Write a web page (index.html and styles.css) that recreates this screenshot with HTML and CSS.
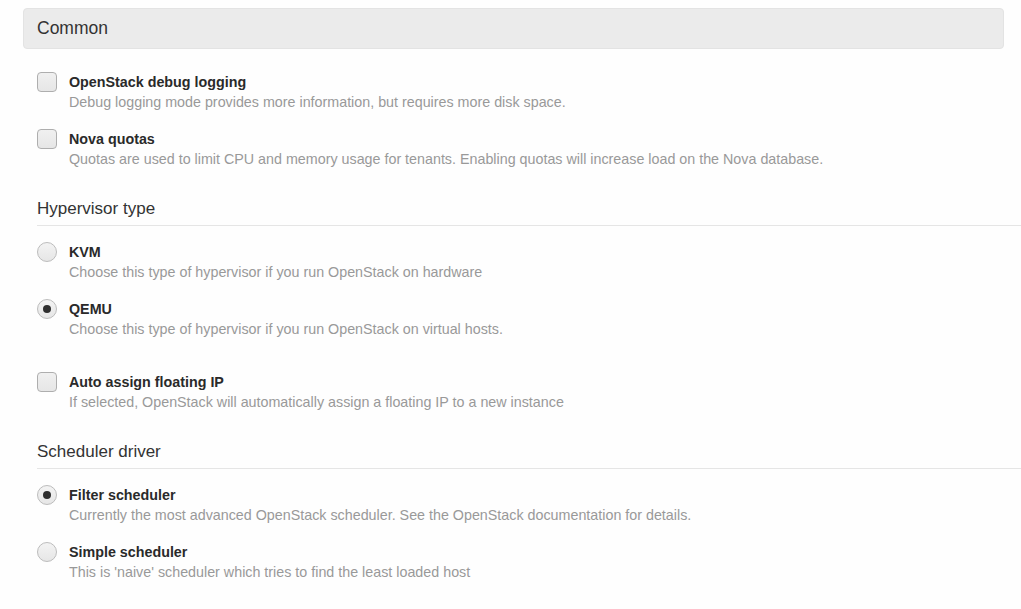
FILE: index.html
```html
<!DOCTYPE html>
<html>
<head>
<meta charset="utf-8">
<link rel="stylesheet" href="styles.css">
</head>
<body>
<div class="page">
  <div class="panel-title">Common</div>

  <div class="group first">
    <div class="item">
      <span class="box checkbox"></span>
      <div class="text">
        <div class="label">OpenStack debug logging</div>
        <div class="desc">Debug logging mode provides more information, but requires more disk space.</div>
      </div>
    </div>
    <div class="item">
      <span class="box checkbox"></span>
      <div class="text">
        <div class="label">Nova quotas</div>
        <div class="desc">Quotas are used to limit CPU and memory usage for tenants. Enabling quotas will increase load on the Nova database.</div>
      </div>
    </div>
  </div>

  <div class="heading">Hypervisor type</div>
  <div class="group radios">
    <div class="item">
      <span class="box radio"></span>
      <div class="text">
        <div class="label">KVM</div>
        <div class="desc">Choose this type of hypervisor if you run OpenStack on hardware</div>
      </div>
    </div>
    <div class="item">
      <span class="box radio checked"></span>
      <div class="text">
        <div class="label">QEMU</div>
        <div class="desc">Choose this type of hypervisor if you run OpenStack on virtual hosts.</div>
      </div>
    </div>
  </div>

  <div class="group">
    <div class="item">
      <span class="box checkbox"></span>
      <div class="text">
        <div class="label">Auto assign floating IP</div>
        <div class="desc">If selected, OpenStack will automatically assign a floating IP to a new instance</div>
      </div>
    </div>
  </div>

  <div class="heading">Scheduler driver</div>
  <div class="group radios">
    <div class="item">
      <span class="box radio checked"></span>
      <div class="text">
        <div class="label">Filter scheduler</div>
        <div class="desc">Currently the most advanced OpenStack scheduler. See the OpenStack documentation for details.</div>
      </div>
    </div>
    <div class="item">
      <span class="box radio"></span>
      <div class="text">
        <div class="label">Simple scheduler</div>
        <div class="desc">This is 'naive' scheduler which tries to find the least loaded host</div>
      </div>
    </div>
  </div>
</div>
</body>
</html>
```

FILE: styles.css
```css
html, body {
  margin: 0;
  padding: 0;
  background: #fefefe;
}
body {
  font-family: "Liberation Sans", Arial, sans-serif;
  color: #333;
  font-size: 14.3px;
  line-height: 20px;
}
.page {
  display: flex;
  flex-direction: column;
  padding: 8px 0 0 23px;
}
.panel-title {
  margin-right: 17px;
  box-sizing: border-box;
  height: 41px;
  background: #ebebeb;
  border: 1px solid #e3e3e3;
  border-radius: 4px;
  padding: 9px 13px 0;
  font-size: 17.5px;
  line-height: 20px;
  color: #333;
}
.group {
  display: flex;
  flex-direction: column;
  padding-left: 14px;
}
.group.first {
  margin-top: 23px;
}
.group.radios {
  margin-top: 16px;
  margin-bottom: 16px;
}
.item {
  display: flex;
  align-items: flex-start;
  gap: 12px;
  margin-bottom: 17px;
}
.box {
  flex: none;
  width: 20px;
  height: 20px;
  box-sizing: border-box;
  position: relative;
}
.checkbox {
  border-radius: 4px;
  border: 1px solid #aeaeae;
  background: linear-gradient(#f0f0f0, #e6e6e6);
}
.radio {
  border-radius: 50%;
  border: 1px solid #bcbcbc;
  background: linear-gradient(#f3f3f3, #e6e6e6);
}
.radio.checked::after {
  content: "";
  position: absolute;
  left: 5px;
  top: 5px;
  width: 8px;
  height: 8px;
  border-radius: 50%;
  background: #2e2e2e;
}
.label {
  font-weight: bold;
  color: #2a2a2a;
}
.desc {
  color: #999;
}
.heading {
  margin-top: 13px;
  margin-left: 14px;
  font-size: 17px;
  line-height: 20px;
  padding-bottom: 6px;
  border-bottom: 1px solid #e5e5e5;
  color: #333;
}
```
